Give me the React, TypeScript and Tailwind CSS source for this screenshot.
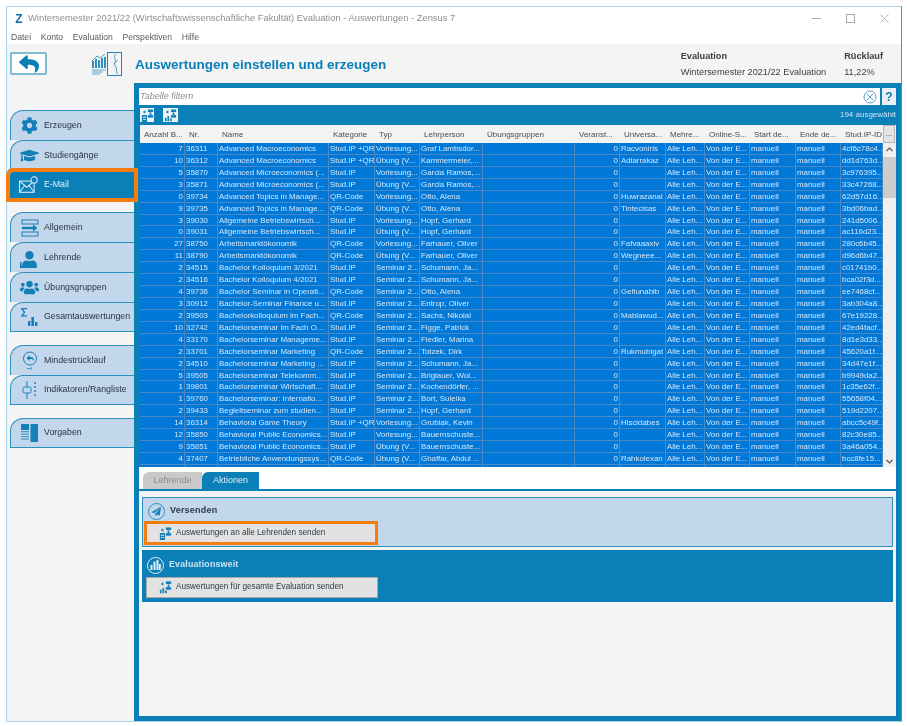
import { FaCog, FaGraduationCap, FaPaperPlane, FaReply, FaUser, FaUsers } from 'react-icons/fa'

const rowGrid =
  'grid grid-cols-[45px_33px_111px_46px_45px_63px_92px_45px_46px_39px_45px_46px_45px_42px]'

const headers = [
  'Anzahl B...',
  'Nr.',
  'Name',
  'Kategorie',
  'Typ',
  'Lehrperson',
  'Übungsgruppen',
  'Veranst...',
  'Universa...',
  'Mehre...',
  'Online-S...',
  'Start de...',
  'Ende de...',
  'Stud.IP-ID'
]

// anzahl, nr, name, kategorie, typ, lehrperson, universal, stud.ip-id
const rows: string[][] = [
  ['7', '36311', 'Advanced Macroeconomics', 'Stud.IP +QR', 'Vorlesung...', 'Graf Lambsdor...', 'Racvoniris', '4cf6c78c4..'],
  ['10', '36312', 'Advanced Macroeconomics', 'Stud.IP +QR', 'Übung (V...', 'Kammermeier,...', 'Adlarrakaz', 'dd1d763d...'],
  ['5', '35870', 'Advanced Microeconomics (...', 'Stud.IP', 'Vorlesung...', 'Garcia Ramos,...', '', '3c976395...'],
  ['3', '35871', 'Advanced Microeconomics (...', 'Stud.IP', 'Übung (V...', 'Garcia Ramos,...', '', '33c47268...'],
  ['0', '39734', 'Advanced Topics in Manage...', 'QR-Code', 'Vorlesung...', 'Otto, Alena', 'Huwrazanal', '62d57d16...'],
  ['9', '39735', 'Advanced Topics in Manage...', 'QR-Code', 'Übung (V...', 'Otto, Alena', 'Tintecisas', '3bd06bad...'],
  ['3', '39030', 'Allgemeine Betriebswirtsch...', 'Stud.IP', 'Vorlesung...', 'Hopf, Gerhard', '', '241d5006...'],
  ['0', '39031', 'Allgemeine Betriebswirtsch...', 'Stud.IP', 'Übung (V...', 'Hopf, Gerhard', '', 'ac116d23...'],
  ['27', '38750', 'Arbeitsmarktökonomik', 'QR-Code', 'Vorlesung...', 'Farhauer, Oliver', 'Fafvaaaxiv', '280c6b45...'],
  ['11', '38790', 'Arbeitsmarktökonomik', 'QR-Code', 'Übung (V...', 'Farhauer, Oliver', 'Wegneee...', 'd96d6b47...'],
  ['2', '34515', 'Bachelor Kolloquium 3/2021', 'Stud.IP', 'Seminar 2...', 'Schumann, Ja...', '', 'c01741b0...'],
  ['2', '34516', 'Bachelor Kolloquium 4/2021', 'Stud.IP', 'Seminar 2...', 'Schumann, Ja...', '', 'bca02f3d...'],
  ['4', '39736', 'Bachelor Seminar in Operati...', 'QR-Code', 'Seminar 2...', 'Otto, Alena', 'Geltunabib', 'ee7468cf...'],
  ['3', '30912', 'Bachelor-Seminar Finance u...', 'Stud.IP', 'Seminar 2...', 'Entrop, Oliver', '', '3ab304a8...'],
  ['2', '39503', 'Bachelorkolloquium im Fach...', 'QR-Code', 'Seminar 2...', 'Sachs, Nikolai', 'Mablawud...', '67e19228...'],
  ['10', '32742', 'Bachelorseminar im Fach O...', 'Stud.IP', 'Seminar 2...', 'Figge, Patrick', '', '42ed4facf...'],
  ['4', '33170', 'Bachelorseminar Manageme...', 'Stud.IP', 'Seminar 2...', 'Fiedler, Marina', '', '8d1e3d33...'],
  ['2', '33701', 'Bachelorseminar Marketing', 'QR-Code', 'Seminar 2...', 'Totzek, Dirk', 'Rukmubigat', '45620a1f...'],
  ['2', '34510', 'Bachelorseminar Marketing ...', 'Stud.IP', 'Seminar 2...', 'Schumann, Ja...', '', '34d47e1f...'],
  ['5', '39505', 'Bachelorseminar Telekomm...', 'Stud.IP', 'Seminar 2...', 'Briglauer, Wol...', '', 'b9949da2...'],
  ['1', '39801', 'Bachelorseminar Wirtschaft...', 'Stud.IP', 'Seminar 2...', 'Kochendörfer, ...', '', '1c35e62f...'],
  ['1', '39760', 'Bachelorseminar: Internatio...', 'Stud.IP', 'Seminar 2...', 'Bort, Suleika', '', '55658f04...'],
  ['2', '39433', 'Begleitseminar zum studien...', 'Stud.IP', 'Seminar 2...', 'Hopf, Gerhard', '', '519d2207...'],
  ['14', '36314', 'Behavioral Game Theory', 'Stud.IP +QR', 'Vorlesung...', 'Grubiak, Kevin', 'Hiscidabes', 'abcc5c49f..'],
  ['12', '35850', 'Behavioral Public Economics...', 'Stud.IP', 'Vorlesung...', 'Bauernschuste...', '', '82c30e85...'],
  ['9', '35851', 'Behavioral Public Economics...', 'Stud.IP', 'Übung (V...', 'Bauernschuste...', '', '3a46a054...'],
  ['4', '37407', 'Betriebliche Anwendungssys...', 'QR-Code', 'Übung (V...', 'Ghaffar, Abdul ...', 'Rahkolexan', 'bcc8fe15...'],
  ['', '', '', '', '', '', '', '']
]

const cell =
  'h-[11.93px] overflow-hidden whitespace-nowrap border-r border-b border-[#4c88c4] px-[1px] leading-[11px]'

function TableRow({ row }: { row: string[] }) {
  const [count, nr, name, cat, typ, person, uni, id] = row
  const online = nr ? 'Von der E...' : ''
  return (
    <div className={rowGrid}>
      <div className={`${cell} text-right`}>{count}</div>
      <div className={cell}>{nr}</div>
      <div className={cell}>{name}</div>
      <div className={cell}>{cat}</div>
      <div className={cell}>{typ}</div>
      <div className={cell}>{person}</div>
      <div className={cell}></div>
      <div className={`${cell} text-right`}>{nr ? '0' : ''}</div>
      <div className={cell}>{uni}</div>
      <div className={cell}>{nr ? 'Alle Leh...' : ''}</div>
      <div className={cell}>{online}</div>
      <div className={cell}>{nr ? 'manuell' : ''}</div>
      <div className={cell}>{nr ? 'manuell' : ''}</div>
      <div className={cell}>{id}</div>
    </div>
  )
}

function AllgemeinIcon() {
  return (
    <svg width="18" height="18" viewBox="0 0 18 18" fill="none" stroke="#1580b5">
      <rect x="1" y="1" width="16" height="4" strokeWidth="1" />
      <rect x="1" y="13" width="16" height="4" strokeWidth="1" />
      <path d="M1 9h12" strokeWidth="2.4" />
      <path d="M12 5.5 16.5 9 12 12.5z" fill="#1580b5" stroke="none" />
    </svg>
  )
}

function LehrendeIcon() {
  return (
    <span className="relative flex h-[20px] w-[20px] items-end justify-center text-[#1580b5]">
      <FaUser size={17} />
      <svg className="absolute bottom-0 left-0" width="20" height="6" viewBox="0 0 20 6" fill="#1580b5">
        <rect x="0" y="0" width="1.5" height="6" />
        <rect x="0" y="4" width="5" height="2" />
      </svg>
    </span>
  )
}

function SummeIcon() {
  return (
    <svg width="20" height="20" viewBox="0 0 20 20" fill="#1580b5">
      <path d="M1 1h6v1.2H3l2.4 3-2.4 3h4V9.4H1V8.4l2.8-3.2L1 2z" />
      <rect x="8" y="14" width="2.4" height="5" />
      <rect x="11.4" y="10" width="2.6" height="9" />
      <rect x="15" y="15" width="2.4" height="4" />
    </svg>
  )
}

function RuecklaufIcon() {
  return (
    <svg width="16" height="20" viewBox="0 0 16 20" fill="none" stroke="#1580b5">
      <circle cx="8" cy="7.5" r="6.5" strokeWidth="1" />
      <path d="M4.5 7 7.5 4v2h1.5c2 0 3 1.5 2.6 4-.6-1.5-1.4-2-2.6-2H7.5v2z" fill="#1580b5" stroke="none" />
      <path d="M5.5 17.5h2M9 16.5v2" strokeWidth="1.2" />
    </svg>
  )
}

function IndikatorIcon() {
  return (
    <svg width="18" height="20" viewBox="0 0 18 20" fill="none" stroke="#1580b5">
      <path d="M6 1v18" strokeWidth="1" />
      <rect x="2" y="7" width="8" height="6" rx="1.5" fill="#c3d7ec" strokeWidth="1" />
      <path d="M14 2v2M14 6v2M14 10v2M14 14v2" strokeWidth="1.4" />
    </svg>
  )
}

function VorgabenIcon() {
  return (
    <svg width="17" height="18" viewBox="0 0 17 18" fill="#1580b5">
      <rect x="0" y="0" width="8" height="6" />
      <rect x="0" y="7" width="8" height="1.2" opacity="0.7" />
      <rect x="0" y="9.5" width="8" height="1.2" opacity="0.7" />
      <rect x="0" y="12" width="8" height="1.2" opacity="0.7" />
      <rect x="0" y="14.5" width="8" height="1.2" opacity="0.7" />
      <rect x="9.5" y="0" width="7.5" height="18" />
    </svg>
  )
}

function MailIcon() {
  return (
    <svg width="19" height="18" viewBox="0 0 17 16" fill="none" stroke="#e4f0f8" strokeWidth="0.9">
      <rect x="0.5" y="4.5" width="13" height="10" />
      <path d="M0.5 4.5 7 10l6.5-5.5M0.5 14.5 5 8.5M13.5 14.5 9 8.5" />
      <circle cx="13.5" cy="3.5" r="2.8" fill="#0a7fb8" />
    </svg>
  )
}

function ReportIcon() {
  return (
    <svg width="31" height="24" viewBox="0 0 31 24" fill="none" stroke="#1a86b8">
      <path d="M1 9 6 4l3 2 5-4" strokeWidth="0.8" />
      <path d="M2 9v7M5 7v9M8 8v8M11 6v10M14 5v11" strokeWidth="1.8" />
      <path d="M1 18h14M1 20h11M1 22h8" strokeWidth="1" opacity="0.7" />
      <rect x="16.5" y="0.5" width="14" height="23" strokeWidth="1" />
      <path d="M25 2c-4 4 2 6-2 10 3 3 2 5 3 10M23 12l4-4" strokeWidth="0.8" />
    </svg>
  )
}

function SendIcon({ chart, size = 13 }: { chart?: boolean; size?: number }) {
  return (
    <svg width={size} height={size} viewBox="0 0 15 15" fill="#1580b5">
      <rect x="8" y="0.5" width="6" height="3" />
      <rect x="8" y="7" width="6" height="3" />
      <path d="M5 1.5 2 3.5l3 2zM10 4h2v3h-2z" />
      {chart ? (
        <path d="M1 14V10h2v4zM4 14V8h2v6zM7 14v-3h2v3z" />
      ) : (
        <path d="M1 7h6v8H1zM2.2 9v1h3.6V9zM2.2 11.5v1h3.6v-1z" fillRule="evenodd" />
      )}
    </svg>
  )
}

function SideTab({
  label,
  icon,
  last
}: {
  label: string
  icon: React.ReactNode
  last?: boolean
}) {
  return (
    <div
      className={`flex h-[30px] items-center rounded-tl-[13px] border-t border-l border-[#2b8fbe] bg-[#c3d7ec] text-[8.8px] text-[#26343f] ${
        last ? 'border-b' : ''
      }`}
    >
      <span className="flex w-[33px] shrink-0 justify-center pl-[4px]">{icon}</span>
      <span className="whitespace-nowrap">{label}</span>
    </div>
  )
}

export default function App() {
  return (
    <div className="h-[726px] w-[907px] bg-white pt-[6px] pr-[5px] pb-[4px] pl-[6px] font-['Liberation_Sans',sans-serif] blur-[0.5px]">
      <div className="flex h-full flex-col border-t border-r border-b border-l border-t-[#a6d6e8] border-r-[#5d93ad] border-b-[#a6d6e8] border-l-[#a6d6e8]">
        <div className="flex h-[23px] shrink-0 items-center pl-[7px] text-[9.4px] text-[#8a8f93]">
          <span className="mr-[4px] flex w-[10px] items-center justify-center text-[12px] leading-none font-bold text-[#0a6fa8]">
            Z
          </span>
          <span className="whitespace-nowrap">
            Wintersemester 2021/22 (Wirtschaftswissenschaftliche Fakultät) Evaluation - Auswertungen - Zensus 7
          </span>
          <div className="ml-auto flex items-center gap-[25px] pr-[12px] text-[#a0a0a0]">
            <span className="h-px w-[9px] bg-[#a8a8a8]"></span>
            <span className="h-[9px] w-[9px] border border-[#a8a8a8]"></span>
            <svg width="9" height="9" viewBox="0 0 9 9" stroke="#a8a8a8" strokeWidth="0.9">
              <path d="M0.5 0.5l8 8M8.5 0.5l-8 8" />
            </svg>
          </div>
        </div>
        <div className="flex h-[14px] shrink-0 items-center gap-[9.6px] pl-[4px] text-[8.6px] text-[#555c62]">
          <span>Datei</span>
          <span>Konto</span>
          <span>Evaluation</span>
          <span>Perspektiven</span>
          <span>Hilfe</span>
        </div>

        <div className="flex min-h-0 flex-1 flex-col bg-[#f4f4f4]">
          <div className="flex h-[39px] shrink-0 items-center">
            <button
              type="button"
              className="ml-[3px] flex h-[23px] w-[37px] items-center justify-center rounded-[2px] border-2 border-[#7dbbd6] bg-white text-[#0a7fb8]"
            >
              <FaReply size={20} />
            </button>
            <span className="ml-[44px]">
              <ReportIcon />
            </span>
            <h1 className="ml-[13px] pt-[3px] text-[13.5px] font-bold whitespace-nowrap text-[#0a7fb8]">
              Auswertungen einstellen und erzeugen
            </h1>
            <div className="ml-auto flex gap-[18px] pt-[3px] pr-[18px] text-[9.2px] text-[#3b4248]">
              <div className="flex flex-col gap-[1.5px]">
                <span className="font-bold">Evaluation</span>
                <span>Wintersemester 2021/22 Evaluation</span>
              </div>
              <div className="flex flex-col gap-[1.5px]">
                <span className="font-bold">Rücklauf</span>
                <span>11,22%</span>
              </div>
            </div>
          </div>

          <div className="flex min-h-0 flex-1">
            <nav className="flex w-[127px] shrink-0 flex-col pt-[27px] pl-[3px]">
              <SideTab label="Erzeugen" icon={<FaCog size={17} color="#1580b5" />} />
              <SideTab label="Studiengänge" icon={<FaGraduationCap size={19} color="#1580b5" />} />
              <div className="relative z-10 mt-[2px] mb-[2px] flex h-[26px] items-center rounded-tl-[3px] bg-[#0a7fb8] text-[8.8px] text-[#e4f0f8] outline-4 outline-[#f57e0f]">
                <span className="flex w-[34px] shrink-0 justify-center pl-[3px]">
                  <MailIcon />
                </span>
                E-Mail
              </div>

              <div className="mt-[12px]">
                <SideTab label="Allgemein" icon={<AllgemeinIcon />} />
                <SideTab label="Lehrende" icon={<LehrendeIcon />} />
                <SideTab label="Übungsgruppen" icon={<FaUsers size={19} color="#1580b5" />} />
                <SideTab label="Gesamtauswertungen" icon={<SummeIcon />} last />
              </div>
              <div className="mt-[13px]">
                <SideTab label="Mindestrücklauf" icon={<RuecklaufIcon />} />
                <SideTab label="Indikatoren/Rangliste" icon={<IndikatorIcon />} last />
              </div>
              <div className="mt-[13px]">
                <SideTab label="Vorgaben" icon={<VorgabenIcon />} last />
              </div>
            </nav>

            <main className="flex min-w-0 flex-1 flex-col border-r-[5px] border-b-[5px] border-l-[5px] border-[#0a7fb8] bg-[#f4f4f4]">
              <div className="shrink-0 bg-[#0a7fb8] pt-[5px]">
                <div className="flex h-[17px] items-center gap-[2px]">
                  <div className="flex h-full flex-1 items-center bg-white pr-[3px] pl-[1px] text-[9px] text-[#8d8d8d] italic">
                    <span>Tabelle filtern</span>
                    <svg className="ml-auto" width="14" height="14" viewBox="0 0 14 14" fill="none" stroke="#4fa3c9">
                      <circle cx="7" cy="7" r="6" strokeWidth="1" />
                      <path d="M4 4l6 6M10 4l-6 6" strokeWidth="1" />
                    </svg>
                  </div>
                  <span className="flex h-full w-[14px] items-center justify-center bg-[#e9eef2] text-[12px] font-bold text-[#0a7fb8]">
                    ?
                  </span>
                </div>
                <div className="flex h-[20px] items-center pl-[1px] text-[8px] text-[#cfe3ef]">
                  <span className="flex h-[14px] w-[14px] items-center justify-center bg-[#eef4f8]">
                    <SendIcon />
                  </span>
                  <span className="ml-[9px] flex h-[14px] w-[15px] items-center justify-center bg-[#eef4f8]">
                    <SendIcon chart />
                  </span>
                  <span className="ml-auto">194 ausgewählt</span>
                </div>

                <div className="pl-[1px]">
                  <div className="flex h-[18px] bg-[#f3f3f3] text-[8px] text-[#444b50]">
                    <div className={rowGrid}>
                      {headers.map((title) => (
                        <div key={title} className="flex items-center overflow-hidden pt-[1px] pl-[4px] whitespace-nowrap">
                          {title}
                        </div>
                      ))}
                    </div>
                    <span className="flex w-[12px] items-center justify-center border border-[#b5b5b5] bg-[#e4e4e4]">
                      ...
                    </span>
                  </div>
                  <div className="flex h-[324px] overflow-hidden bg-[#0078d7] text-[7.9px] text-[#d6e7f8]">
                    <div>
                      {rows.map((row, i) => (
                        <TableRow key={i} row={row} />
                      ))}
                    </div>
                    <div className="flex flex-1 flex-col items-center bg-[#f0f0f0] text-[#555]">
                      <svg className="mt-[4px]" width="7" height="5" viewBox="0 0 7 5" fill="none" stroke="#555" strokeWidth="1.1">
                        <path d="M0.5 4 3.5 1l3 3" />
                      </svg>
                      <span className="mt-[5px] h-[41px] w-full bg-[#cdcdcd]"></span>
                      <svg className="mt-auto mb-[3px]" width="7" height="5" viewBox="0 0 7 5" fill="none" stroke="#555" strokeWidth="1.1">
                        <path d="M0.5 1 3.5 4l3-3" />
                      </svg>
                    </div>
                  </div>
                </div>
              </div>

              <div className="shrink-0 bg-white pt-[5px]">
                <div className="flex h-[19px] border-b-2 border-[#0a7fb8] pl-[4px] text-[9px]">
                  <span className="flex w-[59px] items-center justify-center rounded-tl-[6px] bg-[#c9c9c9] text-[#8b8f92]">
                    Lehrende
                  </span>
                  <span className="flex w-[57px] items-center justify-center rounded-tl-[6px] bg-[#0a7fb8] text-[#dcecf5]">
                    Aktionen
                  </span>
                </div>
              </div>

              <div className="flex flex-col gap-[3px] px-[3px] pt-[6px]">
                <section className="flex h-[50px] flex-col border border-[#2b8fbe] bg-[#c3d7ec] pl-[1px]">
                  <div className="flex h-[23px] shrink-0 items-center gap-[5px] pt-[3px] pl-[4px]">
                    <span className="flex h-[17px] w-[17px] items-center justify-center rounded-full border border-[#2b8fbe] text-[#1580b5]">
                      <FaPaperPlane size={9} />
                    </span>
                    <span className="text-[9px] font-bold tracking-[0.2px] text-[#2c3a46]">Versenden</span>
                  </div>
                  <div className="h-[24px] w-[234px] border-[3px] border-[#f57e0f]">
                    <button
                      type="button"
                      className="flex h-full w-full items-center gap-[4px] bg-[#e2e2e2] pl-[12px] text-[8.2px] whitespace-nowrap text-[#2c3a46]"
                    >
                      <SendIcon />
                      Auswertungen an alle Lehrenden senden
                    </button>
                  </div>
                </section>
                <section className="flex h-[52px] flex-col bg-[#0a7fb8] pl-[4px]">
                  <div className="flex h-[27px] shrink-0 items-center gap-[5px] pt-[3px] pl-[1px]">
                    <span className="flex h-[17px] w-[17px] items-center justify-center rounded-full border border-[#e4f0f8]">
                      <svg width="11" height="10" viewBox="0 0 11 10" fill="#e4f0f8">
                        <rect x="0.5" y="5" width="2" height="5" />
                        <rect x="3.5" y="1.5" width="2" height="8.5" />
                        <rect x="6.5" y="0" width="2" height="10" />
                        <rect x="9" y="4" width="1.8" height="6" />
                      </svg>
                    </span>
                    <span className="text-[8.8px] font-bold tracking-[0.2px] text-[#cfe3ef]">Evaluationsweit</span>
                  </div>
                  <button
                    type="button"
                    className="flex h-[21px] w-[232px] items-center gap-[4px] border border-[#a9a9a9] bg-[#e2e2e2] pl-[12px] text-[8.2px] whitespace-nowrap text-[#2c3a46]"
                  >
                    <SendIcon chart />
                    Auswertungen für gesamte Evaluation senden
                  </button>
                </section>
              </div>
            </main>
          </div>
        </div>
      </div>
    </div>
  )
}
